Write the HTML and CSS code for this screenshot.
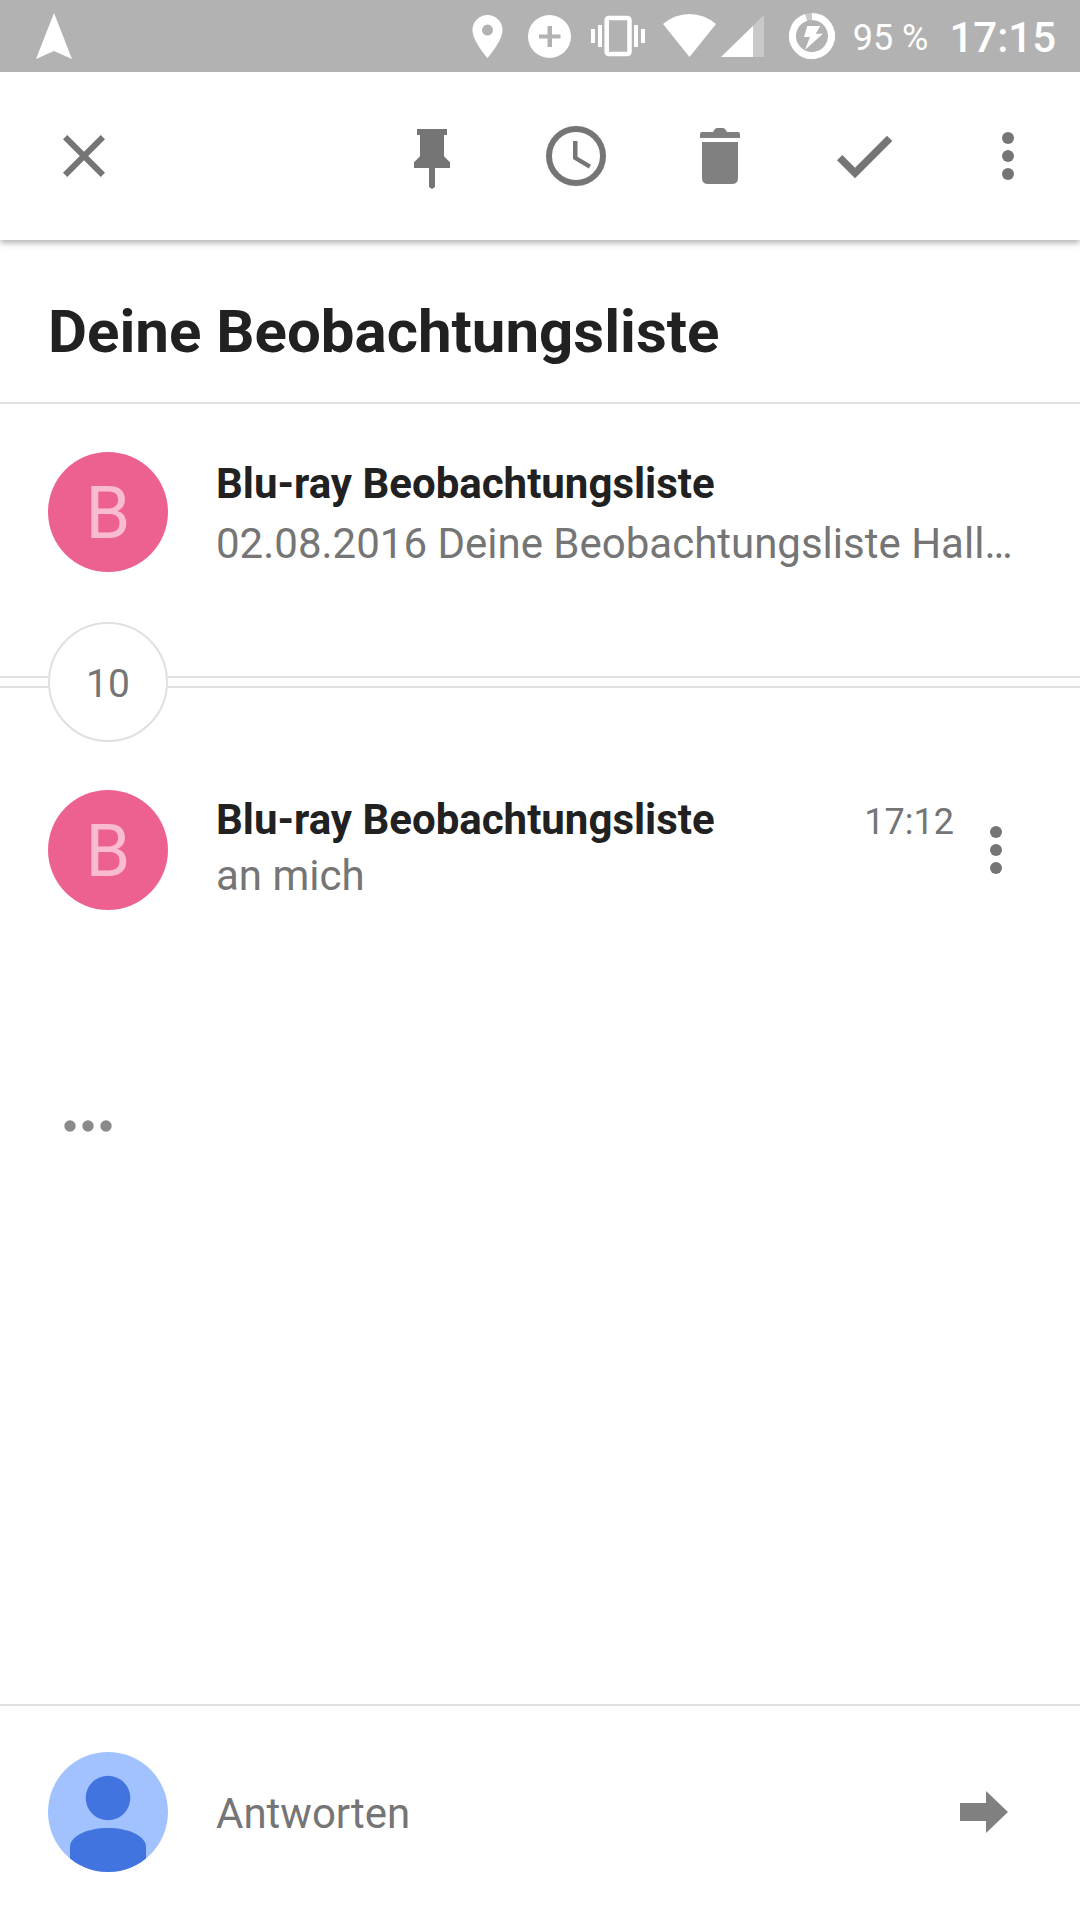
FILE: index.html
```html
<!DOCTYPE html>
<html lang="de">
<head>
<meta charset="utf-8">
<meta name="viewport" content="width=device-width, initial-scale=1">
<title>Deine Beobachtungsliste</title>
<link rel="stylesheet" href="styles.css">
</head>
<body>
<div class="statusbar">
  <svg class="status-nav" width="36" height="48" viewBox="0 0 36 48" aria-hidden="true"><path d="M18 1 36 47 18 39 0 47z"/></svg>
  <svg width="43" height="48" viewBox="0 0 43 48" aria-hidden="true"><path fill-rule="evenodd" d="M21.500 3C13.200 3 6.500 9.700 6.500 18c0 11.300 15 28 15 28s15-16.700 15-28c0-8.300-6.700-15-15-15zm0 20.600a5.500 5.500 0 1 1 0-11 5.500 5.500 0 0 1 0 11z"/></svg>
  <svg width="46" height="48" viewBox="0 0 46 48" aria-hidden="true"><path fill-rule="evenodd" d="M22.500 3a21.500 21.500 0 1 0 0 43 21.500 21.500 0 0 0 0-43zM20.500 14h4.500v8.500h8.500v4H25V35h-4.500v-8.500H12v-4h8.500z"/></svg>
  <svg width="54" height="48" viewBox="0 0 54 48" aria-hidden="true"><rect class="outline" x="15.700" y="5.900" width="22.800" height="36" rx="2"/><path d="M0 17h4v14H0zM7 13h4v22H7zM43 13h4v22h-4zM50 17h4v14h-4z"/></svg>
  <svg width="108" height="48" viewBox="0 0 108 48" aria-hidden="true"><path d="M26.500 45 0 12Q12 2 26.500 2T53 12z"/><path class="faint" d="M58 45 101 3v42z"/><path d="M58 45 90 14v31z"/></svg>
  <svg width="46" height="48" viewBox="0 0 46 48" aria-hidden="true"><circle class="ring faint" cx="23" cy="24" r="19.500"/><path class="ring" d="M23 4.500A19.500 19.500 0 1 1 17 5.450"/><path d="M18.300 14h13l-4.600 7.700H34l-18 16L21 25h-6z"/></svg>
  <span class="battery">95 %</span>
  <span class="clock">17:15</span>
</div>

<header class="toolbar">
  <button class="action" type="button" aria-label="Schließen">
    <svg viewBox="0 0 24 24"><path d="M19 6.410 17.590 5 12 10.590 6.410 5 5 6.410 10.590 12 5 17.590 6.410 19 12 13.410 17.590 19 19 17.590 13.410 12z"/></svg>
  </button>
  <div class="actions">
    <button class="action" type="button" aria-label="Anpinnen">
      <svg viewBox="0 0 24 24"><path d="M7 3h10v2h-1v7.100l2 2V16h-5v6.300l-1 .7-1-.7V16H6v-1.900l2-2V5H7z"/></svg>
    </button>
    <button class="action" type="button" aria-label="Zurückstellen">
      <svg viewBox="0 0 24 24"><circle class="dial" cx="12" cy="12" r="9"/><path d="M12.500 7H11v6l5.250 3.150.75-1.230-4.500-2.670z"/></svg>
    </button>
    <button class="action action-light" type="button" aria-label="Löschen">
      <svg viewBox="0 0 72 72"><path d="M18 22h36v36q0 6-6 6H24q-6 0-6-6zM16 18v-4q0-2 2-2h11l2-3q1-1 2-1h6q1 0 2 1l2 3h11q2 0 2 2v4z"/></svg>
    </button>
    <button class="action" type="button" aria-label="Erledigt">
      <svg viewBox="0 0 72 72"><path d="M9 40.300 14.300 35 27 47.700l32-32 5.300 5.300L27 58.300z"/></svg>
    </button>
    <button class="action" type="button" aria-label="Weitere Optionen">
      <svg viewBox="0 0 24 24"><circle cx="12" cy="6" r="2"/><circle cx="12" cy="12" r="2"/><circle cx="12" cy="18" r="2"/></svg>
    </button>
  </div>
</header>

<main class="thread">
  <h1 class="subject">Deine Beobachtungsliste</h1>

  <article class="message">
    <span class="avatar" aria-hidden="true">B</span>
    <div class="message-text">
      <h2 class="sender">Blu-ray Beobachtungsliste</h2>
      <p class="snippet">02.08.2016 Deine Beobachtungsliste Hall…</p>
    </div>
  </article>

  <div class="collapsed">
    <button class="count" type="button" aria-label="10 weitere Nachrichten">10</button>
  </div>

  <article class="message message-open">
    <span class="avatar" aria-hidden="true">B</span>
    <div class="message-text">
      <div class="message-head">
        <h2 class="sender">Blu-ray Beobachtungsliste</h2>
        <time class="time" datetime="17:12">17:12</time>
      </div>
      <p class="snippet">an mich</p>
    </div>
    <button class="message-menu" type="button" aria-label="Nachrichtenoptionen">
      <svg viewBox="0 0 24 24"><circle cx="12" cy="6" r="2"/><circle cx="12" cy="12" r="2"/><circle cx="12" cy="18" r="2"/></svg>
    </button>
  </article>

  <button class="quoted" type="button" aria-label="Zitierten Text anzeigen">
    <svg width="48" height="12" viewBox="0 0 48 12"><circle cx="6" cy="6" r="5.700"/><circle cx="24" cy="6" r="5.700"/><circle cx="42" cy="6" r="5.700"/></svg>
  </button>
</main>

<footer class="reply">
  <svg class="me" viewBox="0 0 120 120" role="img" aria-label="Mein Profil">
    <defs><clipPath id="round"><circle cx="60" cy="60" r="60"/></clipPath></defs>
    <g clip-path="url(#round)"><path fill="#a1c2fe" d="M0 0h120v120H0z"/><circle fill="#4274e0" cx="60" cy="46" r="22.300"/><path fill="#4274e0" d="M22 120V95c0-11 17-19 38-19s38 8 38 19v25z"/></g>
  </svg>
  <button class="reply-field" type="button">Antworten</button>
  <button class="send" type="button" aria-label="Weiter">
    <svg width="48" height="42" viewBox="0 0 48 42"><path d="M0 12h26V0l22 21-22 21V30H0z"/></svg>
  </button>
</footer>
</body>
</html>
```

FILE: styles.css
```css
*,
*::before,
*::after {
  box-sizing: border-box;
}

body {
  margin: 0;
  min-height: 100vh;
  display: flex;
  flex-direction: column;
  background: #fff;
  color: #757575;
  font-family: Roboto, "Noto Sans", sans-serif;
  font-size: 42px;
}

h1,
h2,
p {
  margin: 0;
}

button {
  margin: 0;
  padding: 0;
  border: 0;
  background: none;
  color: inherit;
  font: inherit;
  cursor: pointer;
}

svg {
  display: block;
  flex: none;
  fill: currentColor;
}

/* System status bar */
.statusbar {
  display: flex;
  align-items: center;
  gap: 18px;
  height: 72px;
  padding: 0 24px 0 36px;
  background: #b2b2b2;
  color: #fff;
}

.status-nav {
  margin-right: auto;
}

.faint {
  opacity: 0.3;
}

.outline {
  fill: none;
  stroke: currentColor;
  stroke-width: 4.5;
}

.ring {
  fill: none;
  stroke: currentColor;
  stroke-width: 7;
}

.battery,
.clock {
  padding-top: 4px;
  line-height: 68px;
  white-space: nowrap;
}

.battery {
  padding-right: 3px;
  font-size: 36px;
}

.clock {
  font-size: 42px;
  font-weight: 500;
}

/* Conversation actions */
.toolbar {
  position: relative;
  display: flex;
  align-items: center;
  justify-content: space-between;
  height: 168px;
  padding-left: 12px;
  background: #fff;
  box-shadow: 0 3px 6px rgba(0, 0, 0, 0.3);
  clip-path: inset(0 0 -12px);
}

.actions {
  display: flex;
}

.action {
  display: flex;
  align-items: center;
  justify-content: center;
  width: 144px;
  height: 144px;
}

.action svg {
  width: 72px;
  height: 72px;
}

.action-light {
  color: #808080;
}

.dial {
  fill: none;
  stroke: currentColor;
  stroke-width: 2;
}

/* Conversation */
.thread {
  flex: 1;
}

.subject {
  padding: 56px 48px 34px;
  border-bottom: 2px solid #e0e0e0;
  color: #212121;
  font-size: 60px;
  font-weight: 700;
  line-height: 72px;
}

.message {
  display: flex;
  align-items: flex-start;
  padding: 48px 48px 46px;
  line-height: 60px;
}

.message-open {
  line-height: 56px;
}

.avatar {
  flex: none;
  width: 120px;
  height: 120px;
  margin-right: 48px;
  border-radius: 50%;
  background: #ed6191;
  color: #f8bbd0;
  font-size: 72px;
  line-height: 124px;
  text-align: center;
}

.message-text {
  flex: 1;
  min-width: 0;
  padding-top: 2px;
}

.message-head {
  display: flex;
  align-items: baseline;
  justify-content: space-between;
}

.sender {
  color: #212121;
  font-size: 42px;
  font-weight: 700;
}

.snippet {
  overflow: hidden;
  text-overflow: ellipsis;
  white-space: nowrap;
}

.time {
  font-size: 36px;
  line-height: 48px;
}

.message-menu {
  flex: none;
  align-self: center;
  margin-left: 6px;
}

.message-menu svg {
  width: 72px;
  height: 72px;
}

.collapsed {
  display: flex;
  align-items: center;
  padding-top: 2px;
}

.collapsed::before,
.collapsed::after {
  content: "";
  height: 12px;
  border: solid #e0e0e0;
  border-width: 2px 0;
}

.collapsed::before {
  width: 48px;
}

.collapsed::after {
  flex: 1;
}

.count {
  width: 120px;
  height: 120px;
  padding-top: 4px;
  border: 2px solid #e0e0e0;
  border-radius: 50%;
  font-size: 39px;
}

.quoted {
  display: flex;
  align-items: center;
  justify-content: center;
  width: 80px;
  height: 48px;
  margin: 146px 48px 0;
  color: #8a8a8a;
}

/* Reply row */
.reply {
  display: flex;
  align-items: center;
  padding: 46px 72px 48px 48px;
  border-top: 2px solid #e0e0e0;
}

.me {
  width: 120px;
  height: 120px;
  margin-right: 48px;
}

.reply-field {
  flex: 1;
  padding-top: 4px;
  line-height: 60px;
  text-align: left;
}

.send {
  color: #808080;
}
```
